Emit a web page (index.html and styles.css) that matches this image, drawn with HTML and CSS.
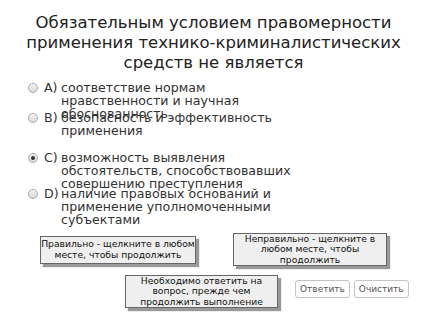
FILE: index.html
```html
<!DOCTYPE html>
<html lang="ru">
<head>
    <meta charset="UTF-8">
    <title>Вопрос</title>
    <link rel="stylesheet" href="styles.css">
</head>
<body>
    <div class="quiz">
        <h1 class="question">Обязательным условием правомерности применения технико-криминалистических средств не является</h1>

        <div class="options">
            <div class="option opt-a">
                <span class="radio"></span>
                <span class="letter">A)</span>
                <span class="text">соответствие нормам нравственности и научная обоснованность</span>
            </div>
            <div class="option opt-b">
                <span class="radio"></span>
                <span class="letter">B)</span>
                <span class="text">безопасность и эффективность применения</span>
            </div>
            <div class="option opt-c">
                <span class="radio checked"></span>
                <span class="letter">C)</span>
                <span class="text">возможность выявления обстоятельств, способствовавших совершению преступления</span>
            </div>
            <div class="option opt-d">
                <span class="radio"></span>
                <span class="letter">D)</span>
                <span class="text">наличие правовых оснований и применение уполномоченными субъектами</span>
            </div>
        </div>

        <div class="feedback-row">
            <div class="msg msg-correct">Правильно - щелкните в любом месте, чтобы продолжить</div>
            <div class="msg msg-wrong">Неправильно - щелкните в любом месте, чтобы продолжить</div>
        </div>

        <div class="action-row">
            <div class="msg msg-required">Необходимо ответить на вопрос, прежде чем продолжить выполнение</div>
            <div class="buttons">
                <button class="btn">Ответить</button>
                <button class="btn">Очистить</button>
            </div>
        </div>
    </div>
</body>
</html>
```

FILE: styles.css
```css
body {
    margin: 0;
    background: #ffffff;
    font-family: "DejaVu Sans", sans-serif;
    color: #222;
}

.quiz {
    width: 427px;
    height: 320px;
    overflow: hidden;
}

.question {
    margin: 0;
    padding-top: 13px;
    font-size: 16.5px;
    font-weight: normal;
    line-height: 20px;
    text-align: center;
    color: #222;
}

.options {
    margin-top: 8px;
    padding-left: 28px;
}

.option {
    display: flex;
    align-items: flex-start;
    font-size: 12.6px;
    line-height: 13px;
    color: #333;
}

/* each answer sits in a fixed slot, long text runs over the next one */
.opt-a { height: 30px; }
.opt-b { height: 40px; }
.opt-c { height: 36px; }
.opt-d { height: 44px; }

.radio {
    width: 8px;
    height: 8px;
    margin-top: 2px;
    border: 1px solid #aaa;
    border-radius: 50%;
    background: linear-gradient(#f4f4f4, #d8d8d8);
    flex-shrink: 0;
    display: flex;
    justify-content: center;
    align-items: center;
}

.radio.checked::after {
    content: "";
    width: 4px;
    height: 4px;
    border-radius: 50%;
    background: #333;
}

.letter {
    width: 17px;
    margin-left: 6px;
    flex-shrink: 0;
}

.text {
    width: 232px;
}

.feedback-row {
    display: flex;
    align-items: center;
    gap: 37px;
    padding-left: 40px;
    margin-top: 2px;
}

.msg {
    box-sizing: border-box;
    background: #efefef;
    border: 1px solid #666;
    box-shadow: 3px 3px 1px #999;
    font-size: 9.2px;
    line-height: 10.5px;
    text-align: center;
    color: #111;
    display: flex;
    align-items: center;
    justify-content: center;
}

.msg-correct {
    width: 156px;
    height: 28px;
    padding: 0;
}

.msg-wrong {
    width: 154px;
    height: 33px;
    padding: 0 10px;
}

.action-row {
    display: flex;
    align-items: flex-start;
    padding-left: 125px;
    margin-top: 9px;
}

.msg-required {
    width: 153px;
    height: 33px;
    padding: 0 14px;
}

.buttons {
    display: flex;
    gap: 4px;
    margin-left: 17px;
    margin-top: 5px;
}

.btn {
    height: 18px;
    padding: 0 4px;
    background: #fff;
    border: 1px solid #c4c4c4;
    border-radius: 3px;
    font-family: "DejaVu Sans", sans-serif;
    font-size: 9px;
    color: #555;
    cursor: pointer;
}
```
